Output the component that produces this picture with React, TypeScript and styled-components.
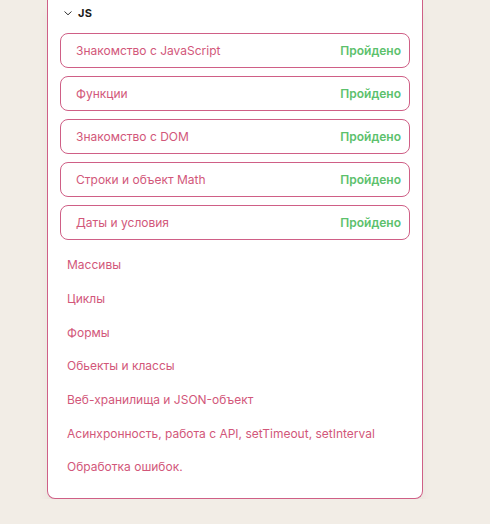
import React from "react";
import styled, { createGlobalStyle } from "styled-components";

const Global = createGlobalStyle`
  html, body { margin: 0; padding: 0; background: #f2ede6; }
  body { font-family: "Inter", "Noto Sans", sans-serif; }
`;

const Page = styled.div`
  padding-left: 47px;
  width: 376px;
`;

const Card = styled.section`
  background: #fff;
  border: 1px solid #cf5f86;
  border-top: 0;
  border-radius: 0 0 8px 8px;
  padding: 0 12px 14px 12px;
  box-shadow: 0 12px 10px rgba(100, 90, 80, 0.06);
`;

const Header = styled.div`
  display: flex;
  align-items: center;
  height: 26px;
  padding-left: 3px;
  gap: 5px;
`;

const Chevron = styled.svg`
  width: 10px;
  height: 10px;
`;

const Title = styled.span`
  font-size: 11px;
  font-weight: 700;
  color: #1b1b1b;
  letter-spacing: 0.3px;
`;

const List = styled.div`
  display: flex;
  flex-direction: column;
  padding-top: 7px;
`;

const DoneRow = styled.div`
  display: flex;
  align-items: center;
  justify-content: space-between;
  height: 33px;
  border: 1px solid #cf5f86;
  border-radius: 8px;
  padding: 0 8px 0 15px;
  margin-bottom: 8px;
`;

const Label = styled.span`
  font-size: 12px;
  color: #d2577a;
`;

const Status = styled.span`
  font-size: 12px;
  font-weight: 600;
  color: #5cc16c;
`;

const PlainRow = styled.div`
  display: flex;
  align-items: center;
  height: 33.7px;
  padding-left: 7px;
`;

const done = [
  "Знакомство с JavaScript",
  "Функции",
  "Знакомство с DOM",
  "Строки и объект Math",
  "Даты и условия",
];

const rest = [
  "Массивы",
  "Циклы",
  "Формы",
  "Обьекты и классы",
  "Веб-хранилища и JSON-объект",
  "Асинхронность, работа с API, setTimeout, setInterval",
  "Обработка ошибок.",
];

export default function App() {
  return (
    <>
      <Global />
      <Page>
        <Card>
          <Header>
            <Chevron viewBox="0 0 10 10">
              <path d="M1.5 3.5 L5 6.8 L8.5 3.5" fill="none" stroke="#333" strokeWidth="1" />
            </Chevron>
            <Title>JS</Title>
          </Header>
          <List>
            {done.map((t) => (
              <DoneRow key={t}>
                <Label>{t}</Label>
                <Status>Пройдено</Status>
              </DoneRow>
            ))}
            {rest.map((t) => (
              <PlainRow key={t}>
                <Label>{t}</Label>
              </PlainRow>
            ))}
          </List>
        </Card>
      </Page>
    </>
  );
}
